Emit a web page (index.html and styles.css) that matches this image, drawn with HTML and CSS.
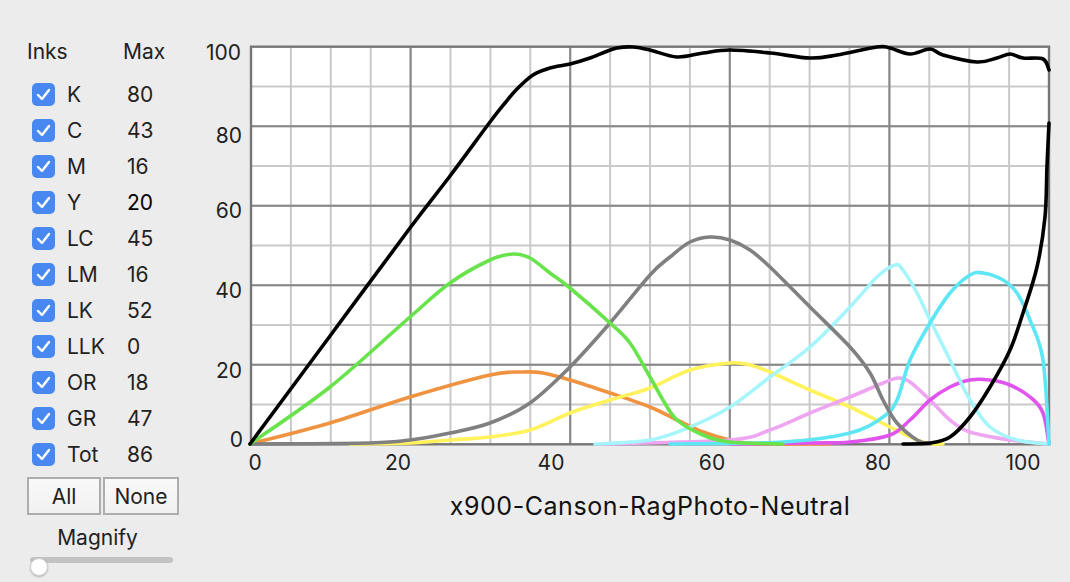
FILE: index.html
```html
<!DOCTYPE html>
<html lang="en">
<head>
<meta charset="utf-8">
<title>Ink curves</title>
<link rel="stylesheet" href="styles.css">
</head>
<body>
<div class="window">
  <aside class="inks">
    <div class="head"><span class="h-inks">Inks</span><span class="h-max">Max</span></div>
    <ul class="rows">
      <li class="row"><span class="cb"><svg viewBox="0 0 23 23"><path d="M6 12 L10 16 L17 7"/></svg></span><span class="name">K</span><span class="val">80</span></li>
      <li class="row"><span class="cb"><svg viewBox="0 0 23 23"><path d="M6 12 L10 16 L17 7"/></svg></span><span class="name">C</span><span class="val">43</span></li>
      <li class="row"><span class="cb"><svg viewBox="0 0 23 23"><path d="M6 12 L10 16 L17 7"/></svg></span><span class="name">M</span><span class="val">16</span></li>
      <li class="row"><span class="cb"><svg viewBox="0 0 23 23"><path d="M6 12 L10 16 L17 7"/></svg></span><span class="name">Y</span><span class="val val-dark">20</span></li>
      <li class="row"><span class="cb"><svg viewBox="0 0 23 23"><path d="M6 12 L10 16 L17 7"/></svg></span><span class="name">LC</span><span class="val">45</span></li>
      <li class="row"><span class="cb"><svg viewBox="0 0 23 23"><path d="M6 12 L10 16 L17 7"/></svg></span><span class="name">LM</span><span class="val">16</span></li>
      <li class="row"><span class="cb"><svg viewBox="0 0 23 23"><path d="M6 12 L10 16 L17 7"/></svg></span><span class="name">LK</span><span class="val">52</span></li>
      <li class="row"><span class="cb"><svg viewBox="0 0 23 23"><path d="M6 12 L10 16 L17 7"/></svg></span><span class="name">LLK</span><span class="val">0</span></li>
      <li class="row"><span class="cb"><svg viewBox="0 0 23 23"><path d="M6 12 L10 16 L17 7"/></svg></span><span class="name">OR</span><span class="val">18</span></li>
      <li class="row"><span class="cb"><svg viewBox="0 0 23 23"><path d="M6 12 L10 16 L17 7"/></svg></span><span class="name">GR</span><span class="val">47</span></li>
      <li class="row"><span class="cb"><svg viewBox="0 0 23 23"><path d="M6 12 L10 16 L17 7"/></svg></span><span class="name">Tot</span><span class="val">86</span></li>
    </ul>
    <div class="btns"><button class="btn btn-all">All</button><button class="btn btn-none">None</button></div>
    <div class="mag">Magnify</div>
    <div class="slider"><div class="track"></div><div class="knob"></div></div>
  </aside>
  <main class="chart">
    <svg class="plot" width="860" height="440" viewBox="200 40 860 440">
      <rect x="251" y="46.7" width="798" height="397.6" fill="#ffffff"/>
      <path class="grid-minor" d="M290.9 46.7V444.3M330.8 46.7V444.3M370.7 46.7V444.3M410.6 46.7V444.3M450.5 46.7V444.3M490.4 46.7V444.3M530.3 46.7V444.3M570.2 46.7V444.3M610.1 46.7V444.3M650 46.7V444.3M689.9 46.7V444.3M729.8 46.7V444.3M769.7 46.7V444.3M809.6 46.7V444.3M849.5 46.7V444.3M889.4 46.7V444.3M929.3 46.7V444.3M969.2 46.7V444.3M1009.1 46.7V444.3M251 86.5H1049M251 126.2H1049M251 166H1049M251 205.7H1049M251 245.5H1049M251 285.3H1049M251 325H1049M251 364.8H1049M251 404.5H1049"/>
      <path class="grid-major" d="M410.6 46.7V444.3M570.2 46.7V444.3M729.8 46.7V444.3M889.4 46.7V444.3M251 126.2H1049M251 205.7H1049M251 285.3H1049M251 364.8H1049"/>
      <rect class="grid-border" x="251" y="46.7" width="798" height="397.6"/>

      <polyline class="c c-or" points="250,444 330,423 410,397 490,375 523,372 543,373 570,380 610,393 650,407 677,420 703,432 730,440 757,444 830,444"/>
      <polyline class="c c-y" points="350,444 410,443 450,440 490,437 530,430 570,413 610,400 650,388 690,370 730,363 750,365 770,372 810,390 850,407 890,427 917,440 930,444 943,444"/>
      <polyline class="c c-lm" points="600,444 730,440 770,430 810,413 850,397 883,383 898,378 910,382 930,400 950,420 970,432 1010,440 1049,444"/>
      <polyline class="c c-m" points="730,444 810,443 850,442 890,435 910,420 930,400 950,387 970,380 990,380 1010,385 1030,397 1043,413 1049,444"/>
      <polyline class="c c-lc" points="595,444 650,440 690,427 730,407 770,377 810,347 850,307 877,277 895,265 903,270 917,293 930,320 950,360 970,400 990,427 1017,440 1049,444"/>
      <polyline class="c c-c" points="670,444 783,442 850,433 883,417 897,400 910,360 930,323 950,293 970,275 983,273 1003,280 1017,293 1030,320 1043,360 1049,444"/>
      <polyline class="c c-lk" points="250,444 370,443 410,440 450,433 490,423 530,403 570,367 610,323 650,275 670,257 690,242 710,237 730,240 750,250 770,267 810,307 850,347 870,373 883,400 897,423 917,440 930,444"/>
      <polyline class="c c-gr" points="250,444 330,387 410,317 450,283 490,260 513,254 530,258 550,273 570,288 610,323 630,343 650,377 663,400 677,420 703,435 730,442 783,444"/>
      <polyline class="c c-k" points="250,444 330,336 410,228 450,176 490,122 505,103 517,89 533,75 550,68 570,64 590,58 605,52 617,48 633,47 650,50 677,57 703,53 730,50 770,53 810,58 837,55 877,47 890,48 910,54 930,49 943,55 977,62 997,58 1010,54 1023,58 1043,59 1049,70"/>
      <polyline class="c c-k" points="903,444 930,443 950,437 970,417 990,387 1010,350 1023,313 1037,267 1045,217 1047,166 1049,123"/>

      <g class="ylab">
        <text x="241" y="52">100</text>
        <text x="242" y="135">80</text>
        <text x="242" y="210">60</text>
        <text x="242" y="290">40</text>
        <text x="242" y="370">20</text>
        <text x="243" y="439">0</text>
      </g>
      <g class="xlab">
        <text x="255" y="462">0</text>
        <text x="398" y="462">20</text>
        <text x="551" y="462">40</text>
        <text x="712" y="462">60</text>
        <text x="878" y="462">80</text>
        <text x="1023" y="462">100</text>
      </g>
    </svg>
    <div class="title">x900-Canson-RagPhoto-Neutral</div>
  </main>
</div>
<script src="script.js"></script>
</body>
</html>
```
FILE: styles.css
```css
html, body {
  margin: 0;
  padding: 0;
  background: #ececec;
}
body {
  font-family: Inter, "Liberation Sans", Arial, sans-serif;
  color: #222222;
  width: 1070px;
  height: 582px;
  overflow: hidden;
}
.window {
  display: flex;
  flex-direction: row;
}
.inks {
  width: 200px;
  flex: none;
  padding-top: 40px;
  box-sizing: border-box;
}
.head {
  display: flex;
  height: 24px;
  line-height: 24px;
  font-size: 21px;
  padding-left: 27px;
}
.h-inks {
  width: 96px;
}
.rows {
  list-style: none;
  margin: 12px 0 0 0;
  padding: 0 0 0 32px;
}
.row {
  display: flex;
  align-items: center;
  height: 36px;
  font-size: 21px;
}
.cb {
  width: 23px;
  height: 23px;
  border-radius: 5px;
  background: #4a88f1;
  margin-right: 12px;
  display: flex;
  flex: none;
}
.cb svg {
  width: 23px;
  height: 23px;
}
.cb path {
  fill: none;
  stroke: #ffffff;
  stroke-width: 2.4;
  stroke-linecap: round;
  stroke-linejoin: round;
}
.name {
  width: 60px;
}
.val-dark {
  color: #000000;
}
.btns {
  display: flex;
  gap: 2px;
  margin: 5px 0 0 27px;
}
.btn {
  height: 38px;
  box-sizing: border-box;
  border: 2px solid #adadad;
  background: linear-gradient(#f9f9f9, #f1f1f1);
  font-family: inherit;
  font-size: 21px;
  color: #222222;
  padding: 0;
  margin: 0;
}
.btn-all {
  width: 74px;
}
.btn-none {
  width: 76px;
}
.mag {
  margin: 11px 0 0 27px;
  width: 141px;
  text-align: center;
  font-size: 21px;
  line-height: 24px;
}
.slider {
  position: relative;
  margin: 3px 0 0 30px;
  width: 143px;
  height: 20px;
}
.track {
  height: 6px;
  margin-top: 7px;
  border-radius: 3px;
  background: #c3c3c3;
}
.knob {
  position: absolute;
  left: 0;
  top: 1px;
  width: 18px;
  height: 18px;
  box-sizing: border-box;
  border-radius: 50%;
  background: #ffffff;
  border: 1px solid #cfcfcf;
  box-shadow: 0 1px 2px rgba(0, 0, 0, 0.25);
}
.chart {
  margin-top: 40px;
  display: flex;
  flex-direction: column;
}
.plot {
  display: block;
}
.grid-minor {
  fill: none;
  stroke: #c9c9c9;
  stroke-width: 2;
}
.grid-major {
  fill: none;
  stroke: #878787;
  stroke-width: 2;
}
.grid-border {
  fill: none;
  stroke: #767676;
  stroke-width: 2.4;
}
.c {
  fill: none;
  stroke-width: 3.6;
  stroke-linejoin: round;
  stroke-linecap: round;
}
.c-k { stroke: #000000; }
.c-gr { stroke: #68e34c; }
.c-or { stroke: #f09340; }
.c-lk { stroke: #808080; }
.c-y { stroke: #fff25c; }
.c-lc { stroke: #a6f5fb; }
.c-c { stroke: #5fe6f4; }
.c-lm { stroke: #eea6f1; }
.c-m { stroke: #e153ee; }
.ylab text,
.xlab text {
  font-family: Inter, "Liberation Sans", Arial, sans-serif;
  font-size: 21px;
  fill: #222222;
  dominant-baseline: central;
}
.ylab text {
  text-anchor: end;
}
.xlab text {
  text-anchor: middle;
}
.title {
  margin: 11px 0 0 51px;
  width: 798px;
  text-align: center;
  font-size: 25px;
  letter-spacing: 0.55px;
  line-height: 30px;
  color: #111111;
}
```
FILE: script.js
```js
(function () {
  var NS = 'http://www.w3.org/2000/svg';
  var lines = document.querySelectorAll('polyline.c');
  var BOTTOM = 444.3;
  function clampY(v) { return Math.min(v, BOTTOM); }
  for (var k = 0; k < lines.length; k++) {
    var pl = lines[k];
    var pts = pl.getAttribute('points').trim().split(/\s+/).map(function (s) {
      return s.split(',').map(Number);
    });
    var d = 'M' + pts[0][0] + ' ' + pts[0][1];
    for (var i = 0; i < pts.length - 1; i++) {
      var p0 = pts[i - 1] || pts[i];
      var p1 = pts[i];
      var p2 = pts[i + 1];
      var p3 = pts[i + 2] || p2;
      var c1x = p1[0] + (p2[0] - p0[0]) / 6;
      var c1y = clampY(p1[1] + (p2[1] - p0[1]) / 6);
      var c2x = p2[0] - (p3[0] - p1[0]) / 6;
      var c2y = clampY(p2[1] - (p3[1] - p1[1]) / 6);
      d += ' C' + c1x.toFixed(2) + ' ' + c1y.toFixed(2) + ' ' + c2x.toFixed(2) + ' ' + c2y.toFixed(2) + ' ' + p2[0] + ' ' + p2[1];
    }
    var path = document.createElementNS(NS, 'path');
    path.setAttribute('d', d);
    path.setAttribute('class', pl.getAttribute('class'));
    pl.parentNode.replaceChild(path, pl);
  }
})();
```
